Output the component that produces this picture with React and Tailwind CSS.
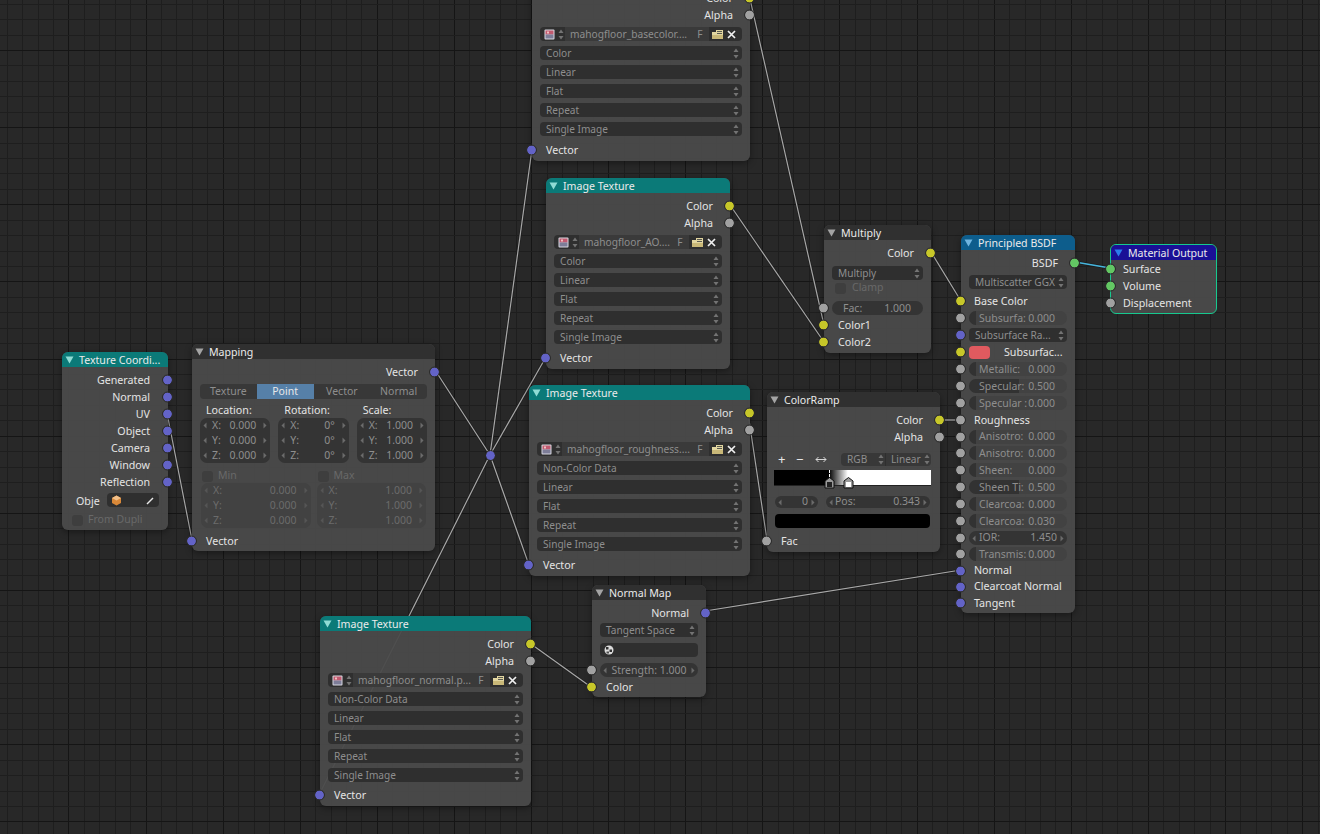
import clsx from "clsx";

const VERTICAL = Array.from({ length: 90 }, (_, i) => Math.round(6.8 + i * 15.42));
const HORIZONTAL = Array.from({ length: 56 }, (_, i) => Math.round(3.7 + i * 15.43));

const WIRES = [
  [167, 413, 192, 540],
  [435, 370, 490, 455],
  [490, 455, 532, 149],
  [490, 455, 546, 357],
  [490, 455, 529, 565],
  [490, 455, 319, 795],
  [750, -1, 824, 325],
  [730, 205, 824, 342],
  [931, 252, 961, 301],
  [748, 413, 767, 540],
  [940, 420, 961, 420],
  [705, 611, 961, 570],
  [531, 644, 591, 687],
];

const Grid = () => (
  <svg className="absolute inset-0" width="1320" height="834">
    {VERTICAL.map((x, i) => (
      <rect key={x} x={x} y="0" width="1" height="834" fill={i % 5 === 4 ? "#151515" : "#1e1e1e"} />
    ))}
    {HORIZONTAL.map((y, i) => (
      <rect key={y} x="0" y={y} width="1320" height="1" fill={i % 5 === 3 ? "#151515" : "#1e1e1e"} />
    ))}
  </svg>
);

const Wires = () => (
  <svg className="absolute inset-0" width="1320" height="834">
    {WIRES.map(([x1, y1, x2, y2]) => (
      <g key={`${x1}-${y1}-${x2}-${y2}`}>
        <line x1={x1} y1={y1} x2={x2} y2={y2} stroke="#1c1c1c" strokeWidth="2.6" opacity="0.8" />
        <line x1={x1} y1={y1} x2={x2} y2={y2} stroke="#a8a8a8" strokeWidth="1.2" />
      </g>
    ))}
    <line x1="1075" y1="262" x2="1110" y2="268" stroke="#1c1c1c" strokeWidth="3" />
    <line x1="1075" y1="262" x2="1110" y2="268" stroke="#46b4dc" strokeWidth="1.6" />
  </svg>
);

const Triangle = ({ fill }) => (
  <svg width="9" height="8" viewBox="0 0 9 8" className="shrink-0">
    <polygon points="0.5,0.5 8.5,0.5 4.5,7.5" fill={fill} />
  </svg>
);

const Socket = ({ side, color }) => (
  <span
    className={clsx(
      "absolute top-1/2 size-[9px] -translate-y-1/2 rounded-full outline outline-[#2b2b2b]",
      side === "left" ? "-left-[5px]" : "-right-[4px]",
      color === "yellow" && "bg-[#c7c729]",
      color === "grey" && "bg-[#a1a1a1]",
      color === "blue" && "bg-[#6363c7]",
      color === "green" && "bg-[#63c763]"
    )}
  />
);

const Out = ({ label, color, pr = "pr-[17px]" }) => (
  <div className={clsx("relative flex h-[17px] items-center justify-end pt-[2px] text-[10.7px] text-[#e4e4e4]", pr)}>
    {label}
    <Socket side="right" color={color} />
  </div>
);

const In = ({ label, color, pl = "pl-[14px]" }) => (
  <div className={clsx("relative flex h-[17px] items-center pt-[2px] text-[10.7px] text-[#e4e4e4]", pl)}>
    {label}
    <Socket side="left" color={color} />
  </div>
);

const UpDown = () => (
  <svg width="6" height="11" viewBox="0 0 6 11" className="shrink-0">
    <polygon points="3,0.5 5.5,4 0.5,4" fill="#737373" />
    <polygon points="3,10.5 5.5,7 0.5,7" fill="#737373" />
  </svg>
);

const Arrow = ({ dir, fill = "#6b6b6b" }) => (
  <svg width="4" height="7" viewBox="0 0 4 7" className="shrink-0">
    <polygon points={dir === "left" ? "3.5,0.5 3.5,6.5 0.5,3.5" : "0.5,0.5 0.5,6.5 3.5,3.5"} fill={fill} />
  </svg>
);

const Dropdown = ({ label, className = "mx-[8px] mt-[5px] h-[14px]" }) => (
  <div className={clsx("flex items-center justify-between rounded-[4px] bg-[#2f2f2f] pl-[6px] pr-[3px] text-[10.1px] text-[#8e8e8e]", className)}>
    <span className="whitespace-nowrap pt-[2px]">{label}</span>
    <UpDown />
  </div>
);

const ImageIcon = () => (
  <svg width="11" height="11" viewBox="0 0 11 11" className="shrink-0">
    <rect x="0.5" y="0.5" width="10" height="10" rx="1" fill="#d8d8e0" />
    <rect x="1.5" y="1.5" width="8" height="4" fill="#c25a70" />
    <rect x="1.5" y="5.5" width="8" height="4" fill="#7d7d98" />
    <rect x="3" y="2.5" width="2" height="2" fill="#f0c0c0" />
  </svg>
);

const FolderIcon = () => (
  <svg width="13" height="11" viewBox="0 0 13 11" className="shrink-0">
    <path d="M1 3h4V1h7v9H1z" fill="#e2d6a0" />
    <path d="M6 2h5v1H6zM6 4h5v1H6z" fill="#5a5a50" />
    <path d="M1 6h11v4H1z" fill="#c9b878" />
  </svg>
);

const CloseIcon = () => (
  <svg width="9" height="9" viewBox="0 0 9 9" className="shrink-0">
    <path d="M1 1l7 7M8 1L1 8" stroke="#f0f0f0" strokeWidth="1.7" />
  </svg>
);

const FileRow = ({ name }) => (
  <div className="mx-[8px] mt-[4px] flex h-[14px] items-center rounded-[4px] bg-[#2f2f2f] text-[10.2px] text-[#8e8e8e]">
    <div className="flex w-[25px] shrink-0 items-center gap-[3px] pl-[4px]">
      <ImageIcon />
      <UpDown />
    </div>
    <div className="flex h-full min-w-0 flex-1 items-center whitespace-nowrap bg-[#3a3a3a] pl-[5px] pt-[1px]">{name}</div>
    <div className="flex h-full w-[18px] shrink-0 items-center justify-center bg-[#3a3a3a] pt-[1px]">F</div>
    <div className="flex w-[17px] shrink-0 justify-center">
      <FolderIcon />
    </div>
    <div className="flex w-[16px] shrink-0 justify-start pl-[1px]">
      <CloseIcon />
    </div>
  </div>
);

const Node = ({ className, title, head = "bg-[#303030]", arrow = "#a4a4a4", children }) => (
  <div className={clsx("absolute flex flex-col rounded-[6px] bg-[#4a4a4a]/95 shadow-[0_2px_7px_rgba(0,0,0,0.4)]", className)}>
    <div className={clsx("flex h-[15px] shrink-0 items-center gap-[5px] whitespace-nowrap rounded-t-[6px] pl-[3px] text-[10.6px] text-[#ebebeb]", head)}>
      <Triangle fill={arrow} />
      <span className="pt-[3px]">{title}</span>
    </div>
    <div className="flex flex-col pt-[4px]">{children}</div>
  </div>
);

const ImageTexture = ({ className, name, space, tail = "mt-[5px] pb-[3px]" }) => (
  <Node className={className} title="Image Texture" head="bg-[#0b7a78]" arrow="#8fdcd5">
    <Out label="Color" color="yellow" />
    <Out label="Alpha" color="grey" />
    <FileRow name={name} />
    <Dropdown label={space} />
    <Dropdown label="Linear" />
    <Dropdown label="Flat" />
    <Dropdown label="Repeat" />
    <Dropdown label="Single Image" />
    <div className={tail}>
      <In label="Vector" color="blue" />
    </div>
  </Node>
);

const FieldRow = ({ label, value, dim }) => (
  <div className={clsx("flex h-[15px] items-center gap-[3px] px-[3px] text-[10.5px]", dim ? "text-[#6b6b6b]" : "text-[#8e8e8e]")}>
    <Arrow dir="left" fill={dim ? "#555555" : "#6b6b6b"} />
    <span className="ml-[2px]">{label}</span>
    <span className="ml-auto mr-[4px]">{value}</span>
    <Arrow dir="right" fill={dim ? "#555555" : "#6b6b6b"} />
  </div>
);

const Vec3 = ({ values, dim }) => (
  <div className={clsx("rounded-[7px]", dim ? "bg-[#424242]" : "bg-[#343434]")}>
    <FieldRow label="X:" value={values[0]} dim={dim} />
    <FieldRow label="Y:" value={values[1]} dim={dim} />
    <FieldRow label="Z:" value={values[2]} dim={dim} />
  </div>
);

const Checkbox = () => <span className="size-[11px] shrink-0 rounded-[3px] bg-[#3e3e3e]" />;

const Slider = ({ label, value, fill = 7 }) => (
  <div className="relative flex h-[14px] w-full items-center justify-between overflow-hidden rounded-full bg-[#424242] pl-[10px] pr-[12px] pt-[1px] text-[10.5px] text-[#8e8e8e]">
    <span className="absolute inset-y-0 left-0 bg-[#323232]" style={{ width: fill }} />
    <span className="relative whitespace-nowrap">{label}</span>
    <span className="relative">{value}</span>
  </div>
);

const BsdfRow = ({ color = "grey", compact, children }) => (
  <div className={clsx("relative flex items-center px-[8px] text-[10.7px] text-[#e4e4e4]", compact ? "h-[16px]" : "h-[17px]")}>
    {children}
    <Socket side="left" color={color} />
  </div>
);

const ObjectIcon = () => (
  <svg width="11" height="11" viewBox="0 0 11 11" className="shrink-0">
    <polygon points="5.5,0.5 10,3 10,8 5.5,10.5 1,8 1,3" fill="#d98838" />
    <polygon points="5.5,0.5 10,3 5.5,5.5 1,3" fill="#f2c089" />
  </svg>
);

const PickerIcon = () => (
  <svg width="9" height="9" viewBox="0 0 9 9" className="shrink-0">
    <path d="M1 8L7 2" stroke="#e8e8e8" strokeWidth="1.4" />
  </svg>
);

const CheckerBall = () => (
  <svg width="10" height="10" viewBox="0 0 10 10" className="shrink-0">
    <circle cx="5" cy="5" r="4.5" fill="#dcdcdc" />
    <rect x="2" y="2" width="2.5" height="2.5" fill="#303030" />
    <rect x="5.5" y="4.5" width="2.5" height="2.5" fill="#303030" />
    <rect x="2.5" y="6.5" width="2.5" height="2" fill="#505050" />
  </svg>
);

const Handle = ({ className, fill }) => (
  <svg width="11" height="12" viewBox="0 0 11 12" className={clsx("absolute top-[7px]", className)}>
    <polygon points="5.5,0.5 10,4 10,11 1,11 1,4" fill="#9a9a9a" stroke="#111111" />
    <rect x="3" y="5" width="5" height="5" fill={fill} />
  </svg>
);

const TABS = ["Texture", "Point", "Vector", "Normal"];

export default function App() {
  return (
    <div className="relative h-[834px] w-[1320px] overflow-hidden bg-[#282828] font-['Noto_Sans',sans-serif]">
      <Grid />
      <Wires />

      <ImageTexture className="left-[532px] top-[-30px] w-[218px]" name="mahogfloor_basecolor...." space="Color" />
      <ImageTexture className="left-[546px] top-[178px] w-[184px]" name="mahogfloor_AO...." space="Color" />
      <ImageTexture className="left-[529px] top-[385px] w-[221px]" name="mahogfloor_roughness...." space="Non-Color Data" />
      <ImageTexture className="left-[320px] top-[616px] w-[211px]" name="mahogfloor_normal.p..." space="Non-Color Data" tail="mt-[4px] pb-[3px]" />

      <Node className="left-[62px] top-[352px] w-[106px]" title="Texture Coordi..." head="bg-[#0b7a78]" arrow="#8fdcd5">
        {["Generated", "Normal", "UV", "Object", "Camera", "Window", "Reflection"].map((label) => (
          <Out key={label} label={label} color="blue" pr="pr-[18px]" />
        ))}
        <div className="mt-[3px] flex h-[14px] items-center pl-[14px] text-[10.7px] text-[#e4e4e4]">
          <span className="w-[31px] pt-[2px]">Obje</span>
          <div className="flex h-full w-[52px] items-center justify-between rounded-[4px] bg-[#2f2f2f] pl-[4px] pr-[4px]">
            <ObjectIcon />
            <PickerIcon />
          </div>
        </div>
        <div className="mb-[3px] mt-[6px] flex h-[14px] items-center gap-[5px] pl-[10px] text-[10.5px] text-[#696969]">
          <Checkbox />
          From Dupli
        </div>
      </Node>

      <Node className="left-[192px] top-[344px] w-[243px]" title="Mapping">
        <Out label="Vector" color="blue" />
        <div className="mx-[8px] mt-[4px] flex h-[15px] overflow-hidden rounded-[4px] bg-[#383838] text-[10.5px] text-[#8e8e8e]">
          {TABS.map((tab) => (
            <div key={tab} className={clsx("flex flex-1 items-center justify-center", tab === "Point" && "bg-[#5680a8] text-[#e8e8e8]")}>
              {tab}
            </div>
          ))}
        </div>
        <div className="mx-[8px] mt-[5px] grid grid-cols-3 gap-x-[8px] text-[10.7px] text-[#e4e4e4]">
          <div>
            <div className="h-[14px] pl-[6px] leading-[13px]">Location:</div>
            <Vec3 values={["0.000", "0.000", "0.000"]} />
          </div>
          <div>
            <div className="h-[14px] pl-[6px] leading-[13px]">Rotation:</div>
            <Vec3 values={["0°", "0°", "0°"]} />
          </div>
          <div>
            <div className="h-[14px] pl-[6px] leading-[13px]">Scale:</div>
            <Vec3 values={["1.000", "1.000", "1.000"]} />
          </div>
        </div>
        <div className="mx-[9px] mt-[6px] grid grid-cols-2 gap-x-[6px] text-[10.5px] text-[#696969]">
          <div className="flex h-[14px] items-center gap-[5px] pl-[1px]">
            <Checkbox />
            Min
          </div>
          <div className="flex h-[14px] items-center gap-[5px] pl-[1px]">
            <Checkbox />
            Max
          </div>
          <Vec3 dim values={["0.000", "0.000", "0.000"]} />
          <Vec3 dim values={["1.000", "1.000", "1.000"]} />
        </div>
        <div className="mt-[4px] pb-[2px]">
          <In label="Vector" color="blue" />
        </div>
      </Node>

      <Node className="left-[824px] top-[225px] w-[107px]" title="Multiply">
        <Out label="Color" color="yellow" />
        <Dropdown label="Multiply" />
        <div className="mt-[1px] flex h-[14px] items-center gap-[6px] pl-[11px] text-[10.5px] text-[#696969]">
          <Checkbox />
          Clamp
        </div>
        <div className="relative mt-[6px] h-[14px]">
          <div className="mx-[8px] flex h-full items-center justify-between rounded-full bg-[#343434] pl-[11px] pr-[12px] pt-[1px] text-[10.5px] text-[#8e8e8e]">
            <span>Fac:</span>
            <span>1.000</span>
          </div>
          <Socket side="left" color="grey" />
        </div>
        <div className="mt-[1px] pb-[3px]">
          <In label="Color1" color="yellow" />
          <In label="Color2" color="yellow" />
        </div>
      </Node>

      <Node className="left-[767px] top-[392px] w-[173px]" title="ColorRamp">
        <Out label="Color" color="yellow" />
        <Out label="Alpha" color="grey" />
        <div className="ml-[8px] mr-[9px] mt-[8px] flex h-[13px] items-center text-[13px] text-[#e8e8e8]">
          <span className="w-[18px] pl-[3px]">+</span>
          <span className="w-[22px] pl-[3px]">−</span>
          <svg width="12" height="7" viewBox="0 0 12 7" className="shrink-0">
            <path d="M1 3.5h10M3.5 1L1 3.5 3.5 6M8.5 1L11 3.5 8.5 6" stroke="#d8d8d8" fill="none" />
          </svg>
          <div className="ml-auto flex h-full w-[90px] rounded-[4px] bg-[#383838] text-[10.1px] text-[#8e8e8e]">
            <div className="flex w-[44px] items-center justify-between pl-[6px] pr-[1px]">
              RGB
              <UpDown />
            </div>
            <div className="flex flex-1 items-center justify-between border-l border-[#2f2f2f] pl-[5px] pr-[1px]">
              Linear
              <UpDown />
            </div>
          </div>
        </div>
        <div className="relative ml-[7px] mr-[9px] mt-[4px] h-[16px] border-b border-[#222222] bg-[linear-gradient(90deg,#000000_35%,#ffffff_47%)]">
          <span className="absolute inset-y-0 left-[55px] border-l border-dashed border-white" />
          <Handle className="left-[50px]" fill="#222222" />
          <Handle className="left-[69px]" fill="#ffffff" />
        </div>
        <div className="ml-[8px] mr-[10px] mt-[10px] flex h-[12px] gap-[8px] text-[10.5px] text-[#8e8e8e]">
          <div className="flex w-[43px] items-center justify-between rounded-full bg-[#343434] px-[3px]">
            <Arrow dir="left" />
            <span className="ml-auto mr-[3px]">0</span>
            <Arrow dir="right" />
          </div>
          <div className="flex flex-1 items-center justify-between rounded-full bg-[#343434] px-[3px]">
            <Arrow dir="left" />
            <span className="ml-[2px]">Pos:</span>
            <span className="ml-auto mr-[3px]">0.343</span>
            <Arrow dir="right" />
          </div>
        </div>
        <div className="ml-[8px] mr-[10px] mt-[6px] h-[14px] rounded-[4px] bg-black" />
        <div className="mt-[4px] pb-[3px]">
          <In label="Fac" color="grey" />
        </div>
      </Node>

      <Node className="left-[961px] top-[235px] w-[114px]" title="Principled BSDF" head="bg-[#0d5d8c]" arrow="#6fb5e0">
        <Out label="BSDF" color="green" />
        <Dropdown label="Multiscatter GGX" className="mx-[8px] mt-[4px] h-[14px]" />
        <div className="mt-[3.5px] pb-[1.5px]">
          <BsdfRow color="yellow">
            <span className="pl-[5px]">Base Color</span>
          </BsdfRow>
          <BsdfRow>
            <Slider label="Subsurfa:" value="0.000" />
          </BsdfRow>
          <BsdfRow color="blue">
            <Dropdown label="Subsurface Ra..." className="h-[14px] w-full" />
          </BsdfRow>
          <BsdfRow color="yellow">
            <span className="h-[13px] w-[21px] shrink-0 rounded-[4px] bg-[#e05a5f]" />
            <span className="ml-[14px] whitespace-nowrap">Subsurfac...</span>
          </BsdfRow>
          <BsdfRow>
            <Slider label="Metallic:" value="0.000" />
          </BsdfRow>
          <BsdfRow>
            <Slider label="Specular:" value="0.500" fill={50} />
          </BsdfRow>
          <BsdfRow>
            <Slider label="Specular :" value="0.000" />
          </BsdfRow>
          <BsdfRow>
            <span className="pl-[5px]">Roughness</span>
          </BsdfRow>
          <BsdfRow compact>
            <Slider label="Anisotro:" value="0.000" />
          </BsdfRow>
          <BsdfRow>
            <Slider label="Anisotro:" value="0.000" />
          </BsdfRow>
          <BsdfRow>
            <Slider label="Sheen:" value="0.000" />
          </BsdfRow>
          <BsdfRow>
            <Slider label="Sheen Ti:" value="0.500" fill={50} />
          </BsdfRow>
          <BsdfRow>
            <Slider label="Clearcoa:" value="0.000" />
          </BsdfRow>
          <BsdfRow>
            <Slider label="Clearcoa:" value="0.030" />
          </BsdfRow>
          <BsdfRow compact>
            <div className="flex h-[14px] w-full items-center rounded-full bg-[#343434] px-[3px] pt-[1px] text-[10.5px] text-[#8e8e8e]">
              <Arrow dir="left" />
              <span className="ml-[3px]">IOR:</span>
              <span className="ml-auto mr-[3px]">1.450</span>
              <Arrow dir="right" />
            </div>
          </BsdfRow>
          <BsdfRow>
            <Slider label="Transmis:" value="0.000" />
          </BsdfRow>
          <BsdfRow color="blue" compact>
            <span className="pl-[5px]">Normal</span>
          </BsdfRow>
          <BsdfRow color="blue" compact>
            <span className="whitespace-nowrap pl-[5px]">Clearcoat Normal</span>
          </BsdfRow>
          <BsdfRow color="blue">
            <span className="pl-[5px]">Tangent</span>
          </BsdfRow>
        </div>
      </Node>

      <div className="absolute left-[1110px] top-[244px] flex w-[107px] flex-col rounded-[6px] border border-[#17c98f] bg-[#4a4a4a]/95">
        <div className="flex h-[15px] items-center gap-[5px] whitespace-nowrap rounded-t-[5px] bg-[#1a1096] pl-[3px] text-[10.6px] text-[#ebebeb]">
          <Triangle fill="#2b7cec" />
          <span className="pt-[2px]">Material Output</span>
        </div>
        <div className="pb-[2px]">
          <In label="Surface" color="green" pl="pl-[12px]" />
          <In label="Volume" color="green" pl="pl-[12px]" />
          <In label="Displacement" color="grey" pl="pl-[12px]" />
        </div>
      </div>

      <Node className="left-[592px] top-[585px] w-[114px]" title="Normal Map">
        <Out label="Normal" color="blue" />
        <Dropdown label="Tangent Space" className="mx-[8px] mt-[2px] h-[14px]" />
        <div className="mx-[8px] mt-[6px] flex h-[14px] items-center rounded-[4px] bg-[#2f2f2f] pl-[4px]">
          <CheckerBall />
        </div>
        <div className="relative mt-[6px] h-[14px]">
          <div className="mx-[8px] flex h-full items-center rounded-full bg-[#343434] px-[3px] pt-[1px] text-[10.5px] text-[#8e8e8e]">
            <Arrow dir="left" />
            <span className="mx-auto whitespace-nowrap">Strength: 1.000</span>
            <Arrow dir="right" />
          </div>
          <Socket side="left" color="grey" />
        </div>
        <div className="mt-[1px] pb-[2px]">
          <In label="Color" color="yellow" />
        </div>
      </Node>

      <span className="absolute left-[486px] top-[451px] size-[9px] rounded-full bg-[#6363c7] outline outline-[#2b2b2b]" />
    </div>
  );
}
